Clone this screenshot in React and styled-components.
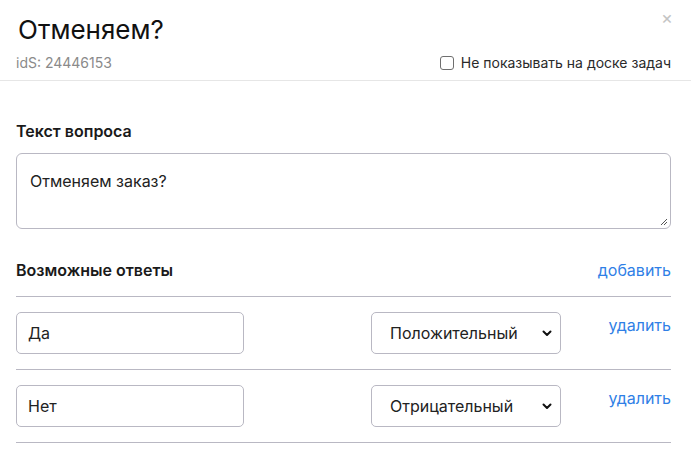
import React from "react";
import styled, { createGlobalStyle } from "styled-components";

const Global = createGlobalStyle`
  html, body { margin: 0; padding: 0; background: #fff; }
  body { font-family: Inter, "Noto Sans", sans-serif; color: #1f1f1f; }
  * { box-sizing: border-box; }
`;

const Modal = styled.div`
  width: 691px;
  background: #fff;
`;

const Header = styled.div`
  position: relative;
  padding: 14px 20px 0 16px;
  border-bottom: 1px solid #e6e6e6;
`;

const Title = styled.h1`
  margin: 0;
  font-size: 26px;
  font-weight: 400;
  line-height: 32px;
  color: #111;
  padding-left: 2px;
`;

const Close = styled.button`
  position: absolute;
  top: 7px;
  right: 18px;
  border: 0;
  background: none;
  color: #c4c4c4;
  font-size: 18px;
  font-family: Inter, sans-serif;
  cursor: pointer;
  padding: 0;
`;

const MetaRow = styled.div`
  display: flex;
  justify-content: space-between;
  align-items: center;
  height: 34px;
  padding-bottom: 1px;
`;

const Ids = styled.span`
  font-size: 14px;
  color: #8a8a8a;
`;

const CheckLabel = styled.label`
  display: flex;
  align-items: center;
  gap: 7px;
  font-size: 14px;
  color: #2a2a2a;
`;

const Check = styled.span`
  width: 14px;
  height: 14px;
  border: 1px solid #6f6f6f;
  border-radius: 3px;
  display: inline-block;
`;

const Body = styled.div`
  padding: 38px 20px 0 16px;
`;

const SectionTitle = styled.div`
  font-size: 16px;
  font-weight: 600;
  color: #1a1a1a;
  line-height: 24px;
`;

const TextArea = styled.div`
  position: relative;
  margin-top: 10px;
  height: 76px;
  border: 1px solid #b9b8c3;
  border-radius: 6px;
  padding: 15px 13px;
  font-size: 16px;
  line-height: 24px;
  color: #222;
`;

const Grip = styled.svg`
  position: absolute;
  right: 2px;
  bottom: 2px;
`;

const AnswersHead = styled.div`
  display: flex;
  justify-content: space-between;
  align-items: center;
  margin-top: 29px;
  padding-bottom: 14px;
  border-bottom: 1px solid #b9b8c3;
`;

const Link = styled.a`
  font-size: 16px;
  color: #2f7fe6;
  text-decoration: none;
  line-height: 24px;
  cursor: pointer;
`;

const Row = styled.div`
  display: flex;
  align-items: flex-start;
  padding: 15px 0;
  border-bottom: 1px solid #b9b8c3;
`;

const Field = styled.div`
  width: 228px;
  height: 42px;
  border: 1px solid #b9b8c3;
  border-radius: 5px;
  padding: 0 11px;
  display: flex;
  align-items: center;
  font-size: 16px;
  color: #222;
`;

const Select = styled.div`
  position: relative;
  margin-left: 127px;
  width: 190px;
  height: 42px;
  border: 1px solid #b9b8c3;
  border-radius: 5px;
  padding: 0 0 0 18px;
  display: flex;
  align-items: center;
  font-size: 16px;
  color: #222;
`;

const Chevron = styled.svg`
  position: absolute;
  right: 8px;
  top: 17px;
`;

const RowLink = styled(Link)`
  margin-left: auto;
  margin-top: 1px;
`;

const answers = [
  { text: "Да", type: "Положительный" },
  { text: "Нет", type: "Отрицательный" },
];

export default function App() {
  return (
    <Modal>
      <Global />
      <Header>
        <Title>Отменяем?</Title>
        <Close>×</Close>
        <MetaRow>
          <Ids>idS: 24446153</Ids>
          <CheckLabel>
            <Check />
            Не показывать на доске задач
          </CheckLabel>
        </MetaRow>
      </Header>
      <Body>
        <SectionTitle>Текст вопроса</SectionTitle>
        <TextArea>
          Отменяем заказ?
          <Grip width="9" height="9" viewBox="0 0 9 9">
            <path d="M8 2 L2 8 M8 5 L5 8" stroke="#555" strokeWidth="1" fill="none" />
          </Grip>
        </TextArea>
        <AnswersHead>
          <SectionTitle>Возможные ответы</SectionTitle>
          <Link>добавить</Link>
        </AnswersHead>
        {answers.map((a) => (
          <Row key={a.text}>
            <Field>{a.text}</Field>
            <Select>
              {a.type}
              <Chevron width="10" height="7" viewBox="0 0 10 7">
                <path d="M1.5 1.5 L5 5 L8.5 1.5" stroke="#111" strokeWidth="2" fill="none" strokeLinecap="round" strokeLinejoin="round" />
              </Chevron>
            </Select>
            <RowLink>удалить</RowLink>
          </Row>
        ))}
      </Body>
    </Modal>
  );
}
